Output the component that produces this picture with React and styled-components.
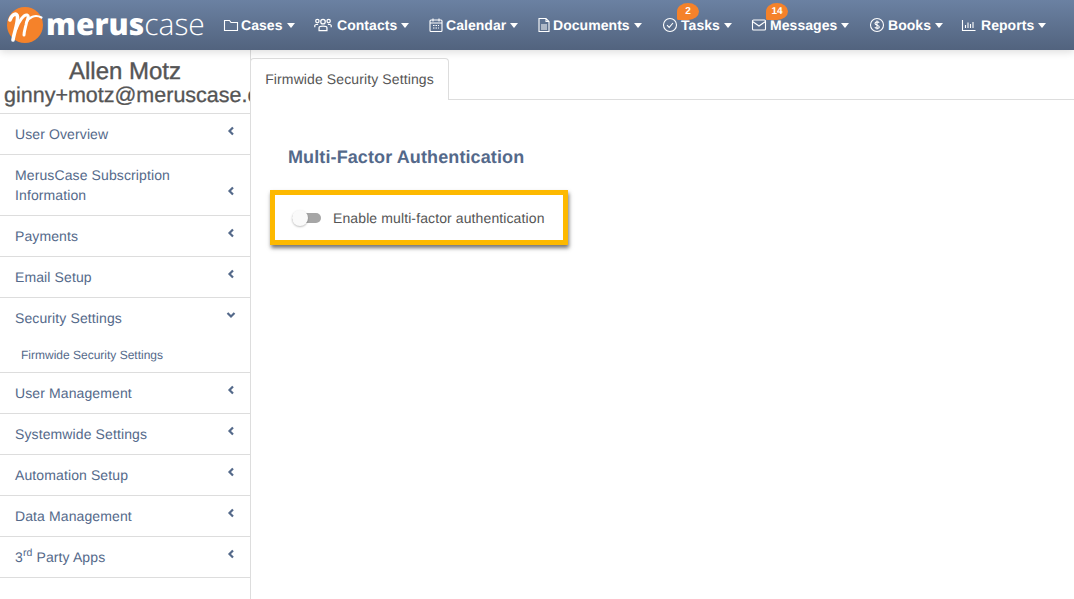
import React from "react";
import styled, { createGlobalStyle } from "styled-components";

const Global = createGlobalStyle`
  html, body { margin: 0; padding: 0; height: 100%; background: #fff; overflow: hidden; }
  body { font-family: "Liberation Sans", Arial, sans-serif; text-rendering: geometricPrecision; letter-spacing: 0.11px; }
  #root { height: 100%; }
`;

const Page = styled.div`
  width: 1074px;
  height: 599px;
  display: flex;
  flex-direction: column;
  overflow: hidden;
`;

const NavBar = styled.header`
  height: 50px;
  flex: none;
  display: flex;
  align-items: center;
  padding-left: 7px;
  background: linear-gradient(#6b81a2, #52637e);
  box-shadow: 0 2px 8px rgba(0, 0, 0, 0.14);
  position: relative;
  z-index: 2;
`;

const Brand = styled.div`
  display: flex;
  align-items: center;
  width: 216px;
  flex: none;
`;

const BrandName = styled.span`
  font-family: "Open Sans", sans-serif;
  font-size: 30px;
  line-height: 30px;
  color: #fff;
  margin-left: 3px;
  margin-top: -2px;
  letter-spacing: 0;
`;

const BrandBold = styled.b`
  font-weight: 800;
`;

const BrandLight = styled.span`
  font-weight: 300;
`;

const NavList = styled.nav`
  display: flex;
  align-items: center;
`;

const NavItem = styled.a`
  position: relative;
  display: flex;
  align-items: center;
  width: ${(p) => p.$w}px;
  flex: none;
  color: #fff;
  font-size: 14px;
  font-weight: 700;
  letter-spacing: 0.05px;
  white-space: nowrap;
`;

const NavIcon = styled.svg`
  width: ${(p) => p.$size}px;
  height: ${(p) => p.$size}px;
  margin-right: ${(p) => p.$gap}px;
  flex: none;
  fill: none;
  stroke: #fff;
  stroke-width: 1.1;
`;

const Caret = styled.i`
  width: 0;
  height: 0;
  margin-left: 4px;
  border-left: 4.5px solid transparent;
  border-right: 4.5px solid transparent;
  border-top: 5px solid #fff;
`;

const Badge = styled.span`
  position: absolute;
  top: -14px;
  left: 15px;
  width: 22px;
  height: 17px;
  border-radius: 50% 50% 50% 8%;
  background: #f5822a;
  color: #fff;
  font-size: 10px;
  line-height: 17px;
  text-align: center;
`;

const Body = styled.div`
  flex: 1;
  display: flex;
  min-height: 0;
`;

const Sidebar = styled.aside`
  width: 250px;
  flex: none;
  border-right: 1px solid #ddd;
  overflow: hidden;
`;

const UserName = styled.div`
  height: 42px;
  padding-top: 8px;
  box-sizing: border-box;
  width: 250px;
  font-size: 24px;
  line-height: 27px;
  color: #555;
  text-align: center;
  letter-spacing: 0;
  -webkit-text-stroke: 0.4px #555;
`;

const UserEmail = styled.div`
  height: 21px;
  margin-top: -8px;
  padding-left: 4px;
  font-size: 21.5px;
  line-height: 23px;
  color: #555;
  white-space: nowrap;
  letter-spacing: 0;
  -webkit-text-stroke: 0.3px #555;
`;

const Menu = styled.ul`
  list-style: none;
  padding: 0;
  border-top: 1px solid #ddd;
  margin: 8px 0 0;
`;

const MenuItem = styled.li`
  border-bottom: 1px solid #ddd;
`;

const MenuRow = styled.div`
  position: relative;
  display: flex;
  align-items: center;
  min-height: ${(p) => p.$h || 40}px;
  padding: 0 45px 0 15px;
  font-size: 14px;
  line-height: 20px;
  color: #54698a;
`;

const Chevron = styled.svg`
  position: absolute;
  right: 14px;
  top: ${(p) => p.$top}px;
  width: 10px;
  height: 10px;
  fill: none;
  stroke: #54698a;
  stroke-width: 2.2;
`;

const SubLink = styled.div`
  padding: 0 0 4px 21px;
  margin-top: 5px;
  font-size: 12px;
  line-height: 25px;
  letter-spacing: 0;
  color: #54698a;
`;

const Sup = styled.sup`
  font-size: 10.5px;
  line-height: 0;
`;

const Main = styled.main`
  flex: 1;
  min-width: 0;
  margin-left: -1px;
`;

const TabBar = styled.div`
  margin-top: 8px;
  height: 41px;
  border-bottom: 1px solid #ddd;
  display: flex;
`;

const Tab = styled.div`
  width: 199px;
  height: 42px;
  box-sizing: border-box;
  border: 1px solid #ddd;
  border-bottom: none;
  border-radius: 4px 4px 0 0;
  background: #fff;
  font-size: 14px;
  line-height: 41px;
  color: #555;
  text-align: center;
`;

const Content = styled.section`
  padding: 47px 0 0 20px;
`;

const Heading = styled.h2`
  margin: 0 0 0 18px;
  font-size: 18px;
  line-height: 20px;
  font-weight: 700;
  color: #54698a;
`;

const Highlight = styled.div`
  margin-top: 23px;
  width: 298px;
  height: 55px;
  box-sizing: border-box;
  border: 5px solid #fdb900;
  box-shadow: 1px 3px 4px rgba(0, 0, 0, 0.55);
  display: flex;
  align-items: center;
  padding-left: 17px;
`;

const Toggle = styled.span`
  position: relative;
  width: 29px;
  height: 10px;
  border-radius: 5px;
  background: #a6a6a6;
  flex: none;
  margin-right: 12px;
`;

const Knob = styled.span`
  position: absolute;
  left: 0;
  top: -3px;
  width: 16px;
  height: 16px;
  border-radius: 50%;
  background: #fafafa;
  box-shadow: 0 1px 2px rgba(0, 0, 0, 0.25);
`;

const ToggleLabel = styled.span`
  font-size: 14px;
  color: #555;
  white-space: nowrap;
`;

const Logo = () => (
  <svg width="36" height="36" viewBox="0 0 36 36" fill="none" stroke="#fff" strokeLinecap="round">
    <circle cx="18" cy="18" r="18" fill="#f5822a" stroke="none" />
    <path d="M3 13 C5 7 10 5 10.500 10 C11 16 7 26 6 33" strokeWidth="3.600" />
    <path d="M9 22 C12 14 17 7 20 8 C23 9 20 12 19 18 C18 22 17 25 17 28" strokeWidth="3" />
    <path d="M19 16 C22 10 28 7 34.500 10.500" strokeWidth="2.200" />
  </svg>
);

const icons = {
  folder: <path d="M1.500 3.500h5l1.500 2h6.500v8h-13z" />,
  users: (
    <>
      <circle cx="8" cy="5" r="2" />
      <circle cx="3" cy="4.500" r="1.500" />
      <circle cx="13" cy="4.500" r="1.500" />
      <path d="M4.500 13v-2.500c0-2 7-2 7 0V13zM.7 10V8.500c0-1 2-1.200 3-1M15.300 10V8.500c0-1-2-1.200-3-1" />
    </>
  ),
  calendar: (
    <>
      <rect x="2" y="3" width="12" height="11.500" rx="1" />
      <path d="M2 6h12M5 1.500v3M11 1.500v3" />
      <path d="M5 8.500h6M5 11h6" strokeDasharray="1.500 1" />
    </>
  ),
  doc: <path d="M3 1.500h7l3 3v10H3zM5 8h6M5 10h6M5 12h6M10 1.500v3h3" />,
  check: (
    <>
      <circle cx="8" cy="8" r="6.500" />
      <path d="M5 8.200l2.200 2.200L11 6" />
    </>
  ),
  mail: (
    <>
      <rect x="1.500" y="3" width="13" height="10" rx="1" />
      <path d="M1.500 4.500L8 9l6.500-4.500" />
    </>
  ),
  dollar: (
    <>
      <circle cx="8" cy="8" r="6.500" />
      <path d="M10.200 5.800C9.500 4.500 6 4.500 6 6.500S10.300 8 10.300 10 6.500 11.500 5.800 10.200M8 3.500v9" />
    </>
  ),
  chart: <path d="M1.500 3v10.500h13M4.500 11V8M7 11V5.500M9.500 11V7M12 11V5" />,
};

const navItems = [
  { label: "Cases", icon: "folder", w: 91, gap: 2 },
  { label: "Contacts", icon: "users", w: 114, gap: 5, size: 18 },
  { label: "Calendar", icon: "calendar", w: 108, gap: 2 },
  { label: "Documents", icon: "doc", w: 126, gap: 1 },
  { label: "Tasks", icon: "check", w: 89, gap: 3, badge: "2" },
  { label: "Messages", icon: "mail", w: 118, gap: 3, badge: "14" },
  { label: "Books", icon: "dollar", w: 92, gap: 3 },
  { label: "Reports", icon: "chart", gap: 4 },
];

const menu = [
  { label: "User Overview" },
  { label: <span>MerusCase Subscription<br />Information</span>, h: 60 },
  { label: "Payments" },
  { label: "Email Setup" },
  { label: "Security Settings", open: true, sub: "Firmwide Security Settings" },
  { label: "User Management" },
  { label: "Systemwide Settings" },
  { label: "Automation Setup" },
  { label: "Data Management" },
  { label: <span>3<Sup>rd</Sup> Party Apps</span> },
];

export default function App() {
  return (
    <Page>
      <Global />
      <NavBar>
        <Brand>
          <Logo />
          <BrandName>
            <BrandBold>merus</BrandBold>
            <BrandLight>case</BrandLight>
          </BrandName>
        </Brand>
        <NavList>
          {navItems.map((n) => (
            <NavItem key={n.label} $w={n.w}>
              <NavIcon viewBox="0 0 16 16" $size={n.size || 16} $gap={n.gap}>{icons[n.icon]}</NavIcon>
              {n.label}
              <Caret />
              {n.badge && <Badge>{n.badge}</Badge>}
            </NavItem>
          ))}
        </NavList>
      </NavBar>
      <Body>
        <Sidebar>
          <UserName>Allen Motz</UserName>
          <UserEmail>ginny+motz@meruscase.com</UserEmail>
          <Menu>
            {menu.map((m, i) => (
              <MenuItem key={i}>
                <MenuRow $h={m.h}>
                  {m.label}
                  <Chevron $top={m.h ? 31 : 12} viewBox="0 0 10 10">
                    <path d={m.open ? "M1.500 3l3.500 3.500L8.500 3" : "M7 1.500L3.500 5 7 8.500"} />
                  </Chevron>
                </MenuRow>
                {m.sub && <SubLink>{m.sub}</SubLink>}
              </MenuItem>
            ))}
          </Menu>
        </Sidebar>
        <Main>
          <TabBar>
            <Tab>Firmwide Security Settings</Tab>
          </TabBar>
          <Content>
            <Heading>Multi-Factor Authentication</Heading>
            <Highlight>
              <Toggle>
                <Knob />
              </Toggle>
              <ToggleLabel>Enable multi-factor authentication</ToggleLabel>
            </Highlight>
          </Content>
        </Main>
      </Body>
    </Page>
  );
}
